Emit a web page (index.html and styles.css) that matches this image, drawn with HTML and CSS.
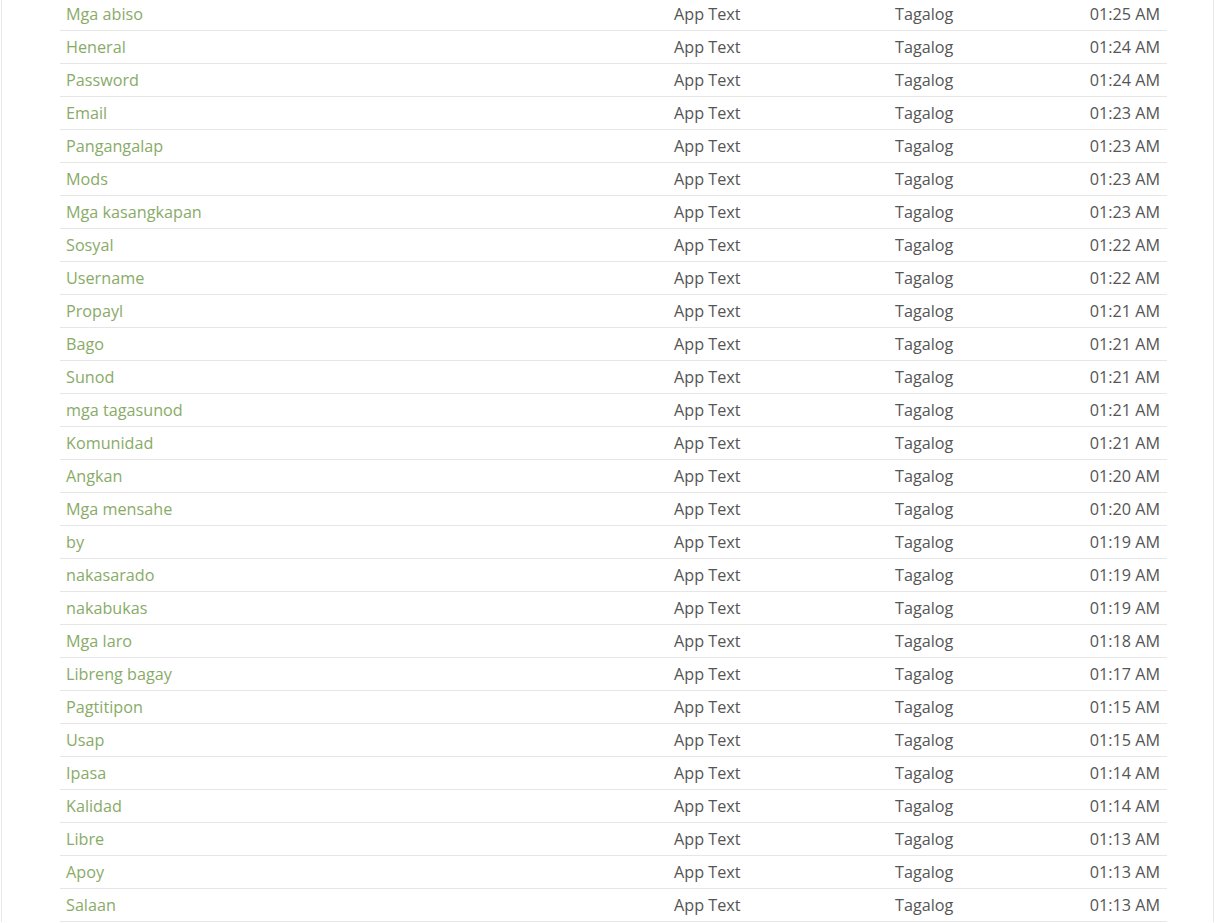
FILE: index.html
```html
<!DOCTYPE html>
<html lang="en">
<head>
    <meta charset="UTF-8">
    <meta name="viewport" content="width=device-width, initial-scale=1.0">
    <title>Recent Translations</title>
    <link rel="stylesheet" href="styles.css">
</head>
<body>
    <div class="panel">
        <table class="recent-table">
            <colgroup>
                <col class="col-phrase">
                <col class="col-type">
                <col class="col-lang">
                <col class="col-time">
            </colgroup>
            <tbody>
                <tr><td class="phrase">Mga abiso</td><td>App Text</td><td>Tagalog</td><td class="time">01:25 AM</td></tr>
                <tr><td class="phrase">Heneral</td><td>App Text</td><td>Tagalog</td><td class="time">01:24 AM</td></tr>
                <tr><td class="phrase">Password</td><td>App Text</td><td>Tagalog</td><td class="time">01:24 AM</td></tr>
                <tr><td class="phrase">Email</td><td>App Text</td><td>Tagalog</td><td class="time">01:23 AM</td></tr>
                <tr><td class="phrase">Pangangalap</td><td>App Text</td><td>Tagalog</td><td class="time">01:23 AM</td></tr>
                <tr><td class="phrase">Mods</td><td>App Text</td><td>Tagalog</td><td class="time">01:23 AM</td></tr>
                <tr><td class="phrase">Mga kasangkapan</td><td>App Text</td><td>Tagalog</td><td class="time">01:23 AM</td></tr>
                <tr><td class="phrase">Sosyal</td><td>App Text</td><td>Tagalog</td><td class="time">01:22 AM</td></tr>
                <tr><td class="phrase">Username</td><td>App Text</td><td>Tagalog</td><td class="time">01:22 AM</td></tr>
                <tr><td class="phrase">Propayl</td><td>App Text</td><td>Tagalog</td><td class="time">01:21 AM</td></tr>
                <tr><td class="phrase">Bago</td><td>App Text</td><td>Tagalog</td><td class="time">01:21 AM</td></tr>
                <tr><td class="phrase">Sunod</td><td>App Text</td><td>Tagalog</td><td class="time">01:21 AM</td></tr>
                <tr><td class="phrase">mga tagasunod</td><td>App Text</td><td>Tagalog</td><td class="time">01:21 AM</td></tr>
                <tr><td class="phrase">Komunidad</td><td>App Text</td><td>Tagalog</td><td class="time">01:21 AM</td></tr>
                <tr><td class="phrase">Angkan</td><td>App Text</td><td>Tagalog</td><td class="time">01:20 AM</td></tr>
                <tr><td class="phrase">Mga mensahe</td><td>App Text</td><td>Tagalog</td><td class="time">01:20 AM</td></tr>
                <tr><td class="phrase">by</td><td>App Text</td><td>Tagalog</td><td class="time">01:19 AM</td></tr>
                <tr><td class="phrase">nakasarado</td><td>App Text</td><td>Tagalog</td><td class="time">01:19 AM</td></tr>
                <tr><td class="phrase">nakabukas</td><td>App Text</td><td>Tagalog</td><td class="time">01:19 AM</td></tr>
                <tr><td class="phrase">Mga laro</td><td>App Text</td><td>Tagalog</td><td class="time">01:18 AM</td></tr>
                <tr><td class="phrase">Libreng bagay</td><td>App Text</td><td>Tagalog</td><td class="time">01:17 AM</td></tr>
                <tr><td class="phrase">Pagtitipon</td><td>App Text</td><td>Tagalog</td><td class="time">01:15 AM</td></tr>
                <tr><td class="phrase">Usap</td><td>App Text</td><td>Tagalog</td><td class="time">01:15 AM</td></tr>
                <tr><td class="phrase">Ipasa</td><td>App Text</td><td>Tagalog</td><td class="time">01:14 AM</td></tr>
                <tr><td class="phrase">Kalidad</td><td>App Text</td><td>Tagalog</td><td class="time">01:14 AM</td></tr>
                <tr><td class="phrase">Libre</td><td>App Text</td><td>Tagalog</td><td class="time">01:13 AM</td></tr>
                <tr><td class="phrase">Apoy</td><td>App Text</td><td>Tagalog</td><td class="time">01:13 AM</td></tr>
                <tr><td class="phrase">Salaan</td><td>App Text</td><td>Tagalog</td><td class="time">01:13 AM</td></tr>
            </tbody>
        </table>
    </div>
</body>
</html>
```

FILE: styles.css
```css
body {
    margin: 0;
    background-color: #fff;
    font-family: 'Open Sans', sans-serif;
    color: #555;
    overflow: hidden;
}

.panel {
    margin: 0 1px;
    padding: 0 46px 0 58px;
    border-left: 1px solid #e8e8e8;
    border-right: 1px solid #e8e8e8;
    min-height: 923px;
}

.recent-table {
    width: 1107px;
    margin-top: -2px;
    border-collapse: collapse;
    table-layout: fixed;
    font-size: 16.2px;
}

.col-phrase {
    width: 608px;
}

.col-type {
    width: 221px;
}

.col-lang {
    width: 160px;
}

.recent-table td {
    height: 32px;
    padding: 0 6px;
    border-bottom: 1px solid #e6e6e6;
    vertical-align: middle;
    line-height: 22px;
    white-space: nowrap;
}

.recent-table td.phrase {
    color: #89ab68;
}

.recent-table td.time {
    text-align: right;
    padding-right: 7px;
}
```
